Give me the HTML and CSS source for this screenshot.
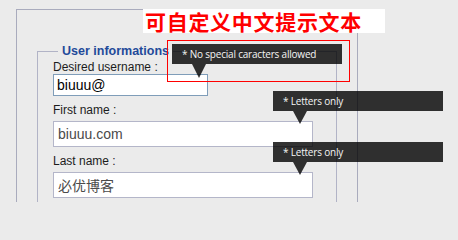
FILE: index.html
```html
<!DOCTYPE html>
<html lang="en">
<head>
<meta charset="utf-8">
<title>User informations</title>
<link rel="stylesheet" href="styles.css">
</head>
<body>
<div class="panel">
  <fieldset class="group">
    <legend class="group-title">User informations</legend>
    <div class="field field-first">
      <label class="field-label" for="username">Desired username :</label>
      <input class="input input-short" id="username" type="text" value="biuuu@">
      <div class="tip tip-username">* No special caracters allowed</div>
    </div>
    <div class="field">
      <label class="field-label field-label-gap" for="firstname">First name :</label>
      <input class="input input-long" id="firstname" type="text" value="biuuu.com">
      <div class="tip tip-name">* Letters only</div>
    </div>
    <div class="field">
      <label class="field-label field-label-gap" for="lastname">Last name :</label>
      <input class="input input-long" id="lastname" type="text" value="必优博客">
      <div class="tip tip-name">* Letters only</div>
    </div>
  </fieldset>
</div>
<div class="note-banner">可自定义中文提示文本</div>
<div class="note-frame"></div>
</body>
</html>
```
FILE: styles.css
```css
html {
  height: 202px;
  overflow: hidden;
}
body {
  box-sizing: border-box;
  margin: 0;
  padding: 9px 0 0 16px;
  height: 202px;
  overflow: hidden;
  background: #ebebeb;
  font-family: "Liberation Sans", Arial, sans-serif;
  color: #1c1c1c;
  position: relative;
}
.panel {
  box-sizing: border-box;
  width: 342px;
  height: 193px;
  border: 1px solid #a9abbd;
  border-bottom: 0;
  padding: 34px 20px 0;
}
.group {
  box-sizing: border-box;
  margin: 0;
  width: 300px;
  height: 158px;
  padding: 0 0 0 15px;
  border: 1px solid #b1b3c6;
  border-bottom: 0;
}
.group-title {
  margin-left: 5px;
  padding: 0 4px;
  font-size: 12.5px;
  font-weight: bold;
  line-height: 15px;
  color: #1f4a9a;
}
.field {
  position: relative;
  margin-top: 7px;
}
.field-first {
  margin-top: 1px;
}
.field-label {
  display: block;
  font-size: 12px;
  line-height: 14px;
  color: #1c1c1c;
}
.field-label-gap {
  margin-bottom: 4px;
}
.input {
  display: block;
  box-sizing: border-box;
  margin: 0;
  font-family: "Liberation Sans", "Noto Sans CJK SC", sans-serif;
  font-size: 14px;
  background: #fff;
  outline: none;
}
.input-short {
  width: 155px;
  height: 22px;
  padding: 0 3px;
  border: 1px solid #7f9db9;
  color: #000;
}
.input-long {
  width: 260px;
  height: 26px;
  padding: 0 4px;
  border: 1px solid #b4b6c9;
  color: #4a4a4a;
}
.tip {
  position: absolute;
  z-index: 2;
  box-sizing: border-box;
  width: 170px;
  height: 20px;
  padding-left: 10px;
  background: rgba(0, 0, 0, 0.8);
  color: #f4f4f4;
  font-family: "Open Sans", sans-serif;
  font-size: 10px;
  letter-spacing: -0.2px;
  line-height: 20px;
  white-space: nowrap;
}
.tip::after {
  content: "";
  position: absolute;
  top: 100%;
  left: 20px;
  border-left: 7px solid transparent;
  border-right: 7px solid transparent;
  border-top: 14px solid rgba(0, 0, 0, 0.8);
}
.tip-username {
  top: -16px;
  left: 119px;
}
.tip-name {
  top: -12px;
  left: 220px;
}
.tip-name::after {
  border-top-width: 13px;
}
.note-banner {
  position: absolute;
  left: 143px;
  top: 9px;
  width: 242px;
  height: 24px;
  padding-left: 2px;
  box-sizing: border-box;
  background: #fff;
  color: #ff0000;
  font-family: "Noto Sans CJK SC", sans-serif;
  font-weight: bold;
  font-size: 21px;
  letter-spacing: 0.7px;
  line-height: 24px;
  white-space: nowrap;
}
.note-frame {
  position: absolute;
  left: 167px;
  top: 40px;
  width: 183px;
  height: 42px;
  box-sizing: border-box;
  border: 1px solid #ff0000;
  z-index: 3;
}
```
